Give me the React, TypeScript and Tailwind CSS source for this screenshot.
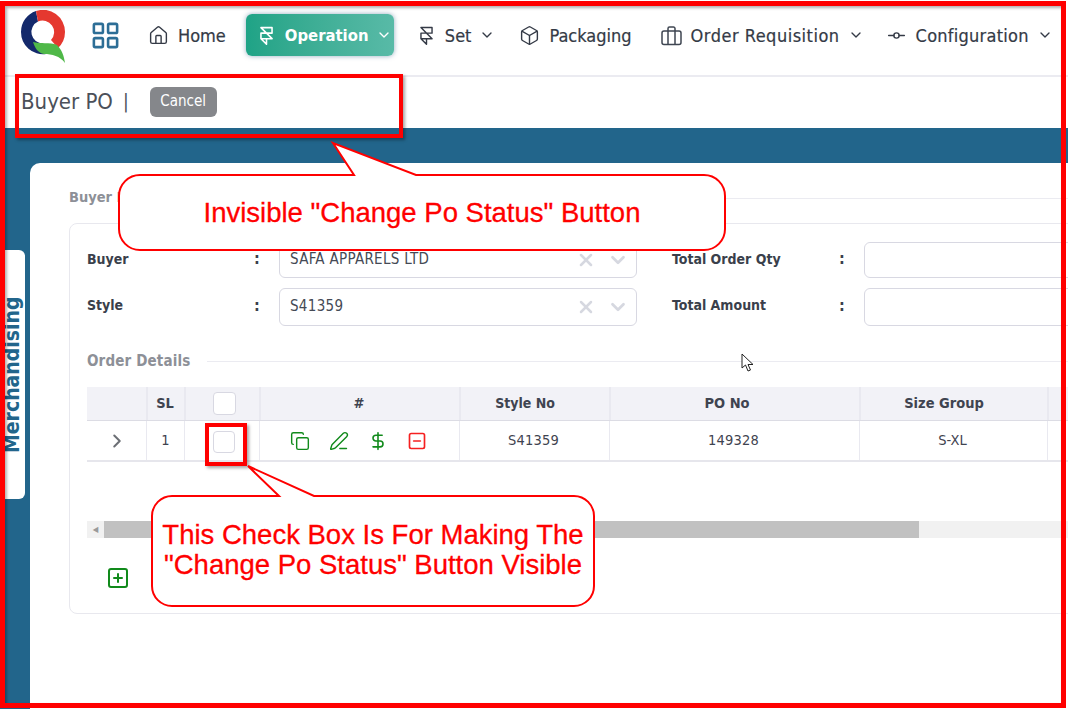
import { House, LayoutGrid, Framer, Box, GitCommitHorizontal, ChevronDown, ChevronRight, Copy, PenLine, DollarSign, SquareMinus, SquarePlus, X } from "lucide-react";

function Logo() {
  return (
    <svg width="48" height="54" viewBox="20 10 48 54" className="shrink-0">
      <path d="M36 11 A22 22 0 0 0 21 32 A22 22 0 0 0 46 54 L38 50 L43 43.5 A11.5 11.5 0 0 1 38 21.6 Z" fill="#14296b" />
      <path d="M36 11 A22 22 0 0 1 65 32 A22 22 0 0 1 58 48 L51 40 A11.5 11.5 0 0 0 38 21.6 Z" fill="#e5382f" />
      <path d="M33 42 C40 44 50 42 57 45 C62 50 64 56 65 63 C60 56 52 54 44 54 C38 53 35 48 33 42 Z" fill="#4fb848" />
    </svg>
  );
}

function NavItem({ icon, label, chevron, className, textClass }: { icon: React.ReactNode; label: string; chevron?: boolean; className?: string; textClass?: string }) {
  return (
    <div className={`flex items-center shrink-0 text-[#343a46] ${className ?? ""}`}>
      {icon}
      <span className={`ml-[9px] pt-[1px] text-[18px] whitespace-nowrap [-webkit-text-stroke:0.2px_#343a46] ${textClass ?? ""}`}>{label}</span>
      {chevron && <ChevronDown size={16} strokeWidth={2} className="ml-[8px] shrink-0" />}
    </div>
  );
}

function Luggage() {
  return (
    <svg width="21" height="21" viewBox="0 0 21 21" fill="none" stroke="#3f4652" strokeWidth="1.5" strokeLinejoin="round">
      <rect x="1" y="6" width="19" height="13.5" rx="2" />
      <path d="M7 19.5V3.5a1.5 1.5 0 0 1 1.5-1.5h4A1.5 1.5 0 0 1 14 3.5v16" />
    </svg>
  );
}

function Field({ label, value, select, className, first }: { label: string; value?: string; select?: boolean; className?: string; first?: boolean }) {
  return (
    <div className={`flex items-center h-full ${className ?? ""}`}>
      <span className={`w-[167px] ${first ? "pb-[2px]" : "pb-[4px]"} shrink-0 text-[14px] font-bold text-[#3a3f4b] whitespace-nowrap`}>{label}</span>
      <span className="w-[25px] pb-[2px] shrink-0 text-[16px] font-bold text-[#3a3f4b]">:</span>
      <div className={`${select ? "w-[358px]" : "w-[300px]"} h-full shrink-0 rounded-[6px] border border-[#d8d8e2] bg-white flex items-center pl-[10px] pr-[7px]`}>
        <span className={`flex-1 ${first ? "pb-[1px]" : "pb-[2px]"} text-[15px] tracking-[0.3px] text-[#454a55]`}>{value}</span>
        {select && (
          <>
            <X size={20} strokeWidth={3} className="text-[#d6d8e0] mr-[11px]" />
            <ChevronDown size={22} strokeWidth={3} className="text-[#d6d8e0]" />
          </>
        )}
      </div>
    </div>
  );
}

const cols = ["w-[59px]", "w-[38px]", "w-[75px]", "w-[200px]", "w-[150px]", "w-[250px]", "w-[188px]", "w-[120px]"];

function Cell({ i, children, head, className }: { i: number; children?: React.ReactNode; head?: boolean; className?: string }) {
  return (
    <div className={`${cols[i]} shrink-0 h-full flex items-center justify-center ${i > 0 ? (head ? "border-l-2 border-[#e9e9f0]" : "border-l border-[#e9e9f0]") : ""} ${className ?? ""}`}>
      {children}
    </div>
  );
}

function Checkbox({ className }: { className?: string }) {
  return <div className={`rounded-[4px] border border-[#d8d8e2] bg-white ${className ?? ""}`} />;
}

export default function App() {
  return (
    <div className="relative w-[1068px] h-[709px] overflow-hidden bg-white flex flex-col font-['DejaVu_Sans_Condensed','DejaVu_Sans',sans-serif] [font-stretch:condensed]">
      {/* top nav */}
      <header className="h-[77px] shrink-0 border-b-2 border-[#ebebf1] flex items-center pl-[20px] pb-[5px]">
        <div className="mt-[4px]"><Logo /></div>
        <LayoutGrid size={31} strokeWidth={2} className="text-[#2d6e96] ml-[22px] shrink-0" />
        <NavItem icon={<House size={21} strokeWidth={1.6} className="shrink-0" />} label="Home" className="ml-[27px]" />
        <div className="ml-[20px] w-[148px] h-[42px] rounded-[6px] shrink-0 flex items-center pl-[11px] text-white bg-gradient-to-r from-[#1ea386] to-[#58baa7] shadow-[0_0_5px_rgba(40,90,130,0.5)]">
          <Framer size={19} strokeWidth={2} className="shrink-0" />
          <span className="ml-[9px] pt-[2px] text-[16.5px] font-bold">Operation</span>
          <ChevronDown size={16} strokeWidth={2} className="ml-[8px] shrink-0" />
        </div>
        <NavItem icon={<Framer size={19} strokeWidth={1.8} className="shrink-0" />} label="Set" chevron className="ml-[23px]" />
        <NavItem icon={<Box size={21} strokeWidth={1.6} className="shrink-0" />} label="Packaging" className="ml-[24px]" />
        <NavItem icon={<Luggage />} label="Order Requisition" chevron className="ml-[29px]" textClass="tracking-[0.5px]" />
        <NavItem icon={<GitCommitHorizontal size={21} strokeWidth={1.6} className="shrink-0" />} label="Configuration" chevron className="ml-[22px]" textClass="tracking-[0.25px]" />
      </header>

      {/* title bar */}
      <div className="h-[51px] shrink-0 flex items-center pl-[21px] pb-[2px]">
        <span className="text-[22px] text-[#4b5059]">Buyer PO</span>
        <span className="ml-[10px] text-[19px] text-[#4b5059]">|</span>
        <button className="ml-[21px] w-[67px] h-[30px] rounded-[6px] bg-[#85878b] text-white text-[15px]">Cancel</button>
      </div>

      {/* body */}
      <main className="flex-1 bg-[#22658b] flex items-start min-h-0">
        <div className="mt-[122px] ml-[5px] w-[20px] h-[249px] shrink-0 bg-white rounded-r-[6px] overflow-hidden flex items-center justify-center">
          <span className="-rotate-90 whitespace-nowrap text-[21px] font-bold text-[#22658b] translate-x-[-3px]">Merchandising</span>
        </div>
        <section className="ml-[5px] mt-[35px] flex-1 h-[560px] bg-white rounded-tl-[10px] pl-[39px] min-w-0 overflow-hidden">
          <div className="flex items-center mt-[25px] h-[20px]">
            <span className="text-[14.5px] font-bold text-[#8d9097] whitespace-nowrap">Buyer PO</span>
            <div className="ml-[12px] flex-1 h-px bg-[#ebebf1]" />
          </div>
          <div className="mt-[15px] w-[1100px] h-[391px] rounded-[8px] border border-[#e8e8ee] pl-[17px]">
            <div className="flex h-[36px] mt-[18px]">
              <Field first label="Buyer" value="SAFA APPARELS LTD" select />
              <Field first label="Total Order Qty" className="ml-[35px]" />
            </div>
            <div className="flex h-[38px] mt-[10px]">
              <Field label="Style" value="S41359" select />
              <Field label="Total Amount" className="ml-[35px]" />
            </div>
            <div className="flex items-center mt-[25px] h-[20px]">
              <span className="text-[15px] tracking-[0.15px] font-bold text-[#8d9097] whitespace-nowrap">Order Details</span>
              <div className="ml-[17px] flex-1 h-px bg-[#ebebf1]" />
            </div>
            <div className="mt-[16px] w-[1081px] text-[14.5px] text-[#3f4450]">
              <div className="flex h-[34px] bg-[#f2f2f7] border-b border-[#dcdce4] font-bold">
                <Cell i={0} head />
                <Cell i={1} head className="pr-[2px]">SL</Cell>
                <Cell i={2} head><Checkbox className="w-[23px] h-[23px] ml-[3px]" /></Cell>
                <Cell i={3} head className="pr-[2px]">#</Cell>
                <Cell i={4} head className="pr-[20px] text-[14px]">Style No</Cell>
                <Cell i={5} head className="pr-[16px]">PO No</Cell>
                <Cell i={6} head className="pr-[20px]">Size Group</Cell>
                <Cell i={7} head />
              </div>
              <div className="flex h-[41px] border-b-2 border-[#e6e6ec]">
                <Cell i={0}><ChevronRight size={22} strokeWidth={2.2} className="text-[#6c6f75] ml-[1px]" /></Cell>
                <Cell i={1} className="pt-[1px]">1</Cell>
                <Cell i={2}><Checkbox className="w-[22px] h-[22px] ml-[3px] mt-[2px]" /></Cell>
                <Cell i={3}>
                  <div className="flex items-center gap-[19px] -ml-[2px]">
                    <Copy size={20} strokeWidth={1.7} className="text-[#118a1b]" />
                    <PenLine size={20} strokeWidth={1.7} className="text-[#118a1b]" />
                    <DollarSign size={20} strokeWidth={1.9} className="text-[#118a1b]" />
                    <SquareMinus size={20} strokeWidth={2} className="text-[#f52020]" />
                  </div>
                </Cell>
                <Cell i={4} className="pr-[2px] pt-[1px] tracking-[0.2px]">S41359</Cell>
                <Cell i={5} className="pr-[2px] pt-[1px] tracking-[0.2px]">149328</Cell>
                <Cell i={6} className="pr-[2px] pt-[1px]">S-XL</Cell>
                <Cell i={7} />
              </div>
            </div>
            <div className="mt-[59px] w-[1081px] h-[17px] bg-[#f1f1f1] flex items-center">
              <span className="w-[17px] shrink-0 text-center text-[8px] text-[#9a9a9a] leading-none">◀</span>
              <div className="w-[815px] h-full bg-[#c1c1c1]" />
            </div>
            <SquarePlus size={24} strokeWidth={2} className="text-[#118a1b] mt-[28px] ml-[19px]" />
          </div>
        </section>
      </main>

      {/* annotations overlaying the screenshot */}
      <div className="absolute left-0 top-[1px] w-[1066px] h-[707px] border-[5px] border-[#ff0000] shadow-[inset_2px_2px_3px_rgba(0,0,0,0.3)] pointer-events-none" />
      <div className="absolute left-[15px] top-[74px] w-[388px] h-[64px] border-[4px] border-[#ff0000] shadow-[2px_2px_3px_rgba(0,0,0,0.35)]" />
      <div className="absolute left-[205px] top-[423px] w-[42px] h-[43px] border-[4px] border-[#ff0000] shadow-[2px_2px_3px_rgba(0,0,0,0.35)]" />

      <svg className="absolute left-0 top-0" width="1068" height="709" fill="white" stroke="#ff0000">
        <path strokeWidth="2" d="M140 175 H354 L333 143 L416 175 H704 A21 21 0 0 1 725 196 V229 A21 21 0 0 1 704 250 H140 A21 21 0 0 1 119 229 V196 A21 21 0 0 1 140 175 Z" />
        <path strokeWidth="2" d="M172 496 H279 L248 466 L314 496 H574 A20 20 0 0 1 594 516 V586 A20 20 0 0 1 574 606 H172 A20 20 0 0 1 152 586 V516 A20 20 0 0 1 172 496 Z" />
      </svg>
      <div className="absolute left-[118px] top-[174px] w-[608px] h-[77px] flex items-center justify-center text-[27.5px] text-[#ff0000] [font-stretch:normal] font-['Liberation_Sans',sans-serif] [-webkit-text-stroke:0.3px_#ff0000]">
        Invisible "Change Po Status" Button
      </div>
      <div className="absolute left-[151px] top-[495px] w-[444px] h-[112px] pb-[2px] flex flex-col items-center justify-center text-[27.5px] leading-[30px] text-[#ff0000] [font-stretch:normal] font-['Liberation_Sans',sans-serif] [-webkit-text-stroke:0.3px_#ff0000]">
        <span>This Check Box Is For Making The</span>
        <span>"Change Po Status" Button Visible</span>
      </div>

      {/* mouse cursor */}
      <svg className="absolute left-[741px] top-[353px]" width="14" height="20" viewBox="0 0 14 20" fill="white" stroke="#222" strokeWidth="1">
        <path d="M1 1 V15 L4.5 12 L7 18 L9.5 17 L7 11.5 H12 Z" />
      </svg>
    </div>
  );
}
